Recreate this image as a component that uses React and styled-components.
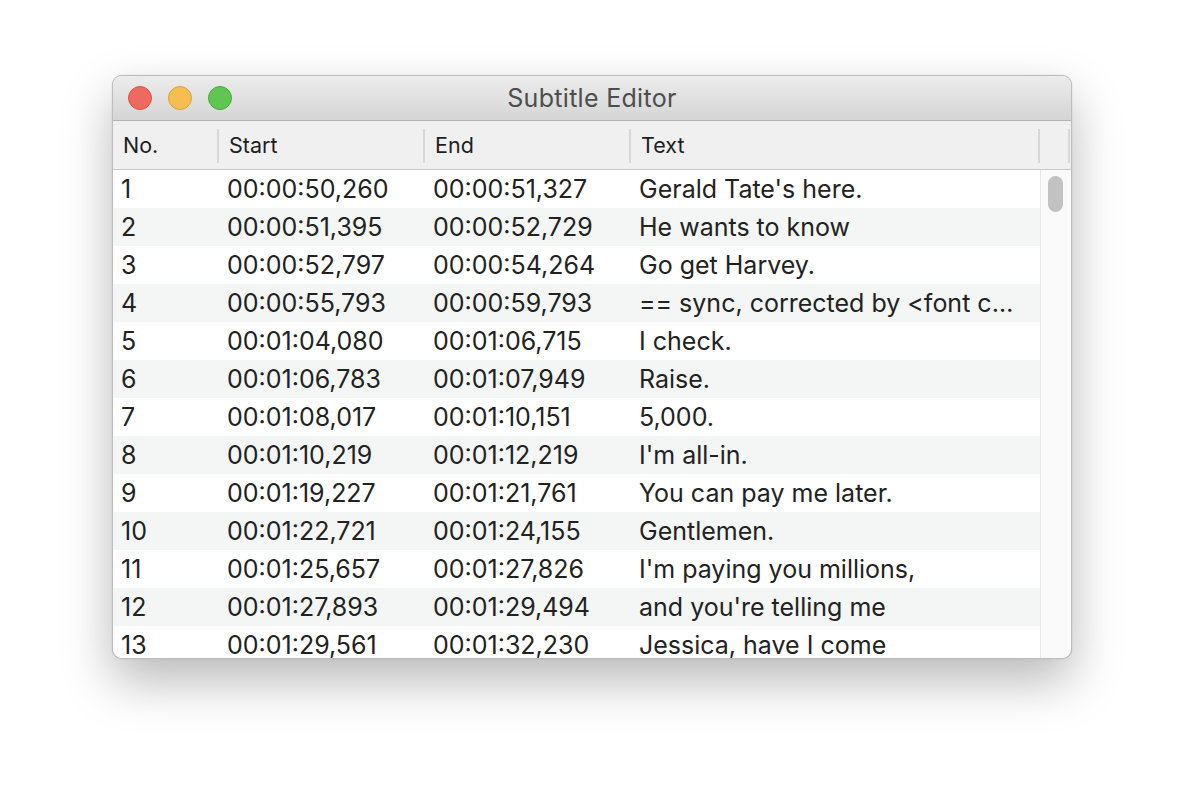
import styled, { createGlobalStyle } from "styled-components"

const Global = createGlobalStyle`
  html, body { margin: 0; padding: 0; background: #ffffff; }
  body { font-family: Inter, "Liberation Sans", sans-serif; }
`

const Page = styled.div`
  width: 1184px;
  height: 808px;
  padding: 75px 0 0 112px;
  box-sizing: border-box;
`

const Window = styled.div`
  width: 960px;
  height: 584px;
  box-sizing: border-box;
  border: 1px solid #bdbdbd;
  border-radius: 10px;
  overflow: hidden;
  display: flex;
  flex-direction: column;
  background: #ffffff;
  box-shadow: 0 22px 50px rgba(0, 0, 0, 0.28), 0 0 1px rgba(0, 0, 0, 0.3);
`

const TitleBar = styled.div`
  height: 44px;
  flex-shrink: 0;
  display: flex;
  align-items: center;
  position: relative;
  background: linear-gradient(#ececec, #d5d5d5);
  border-bottom: 1px solid #b3b3b3;
`

const Lights = styled.div`
  display: flex;
  gap: 16px;
  padding-left: 15px;
`

const Light = styled.span`
  width: 24px;
  height: 24px;
  border-radius: 50%;
  box-sizing: border-box;
  background: ${p => p.$fill};
  border: 1px solid ${p => p.$edge};
`

const Title = styled.div`
  position: absolute;
  left: 0;
  right: 0;
  text-align: center;
  font-size: 25px;
  letter-spacing: 0.3px;
  color: #4d4d4d;
  pointer-events: none;
`

const Header = styled.div`
  height: 48px;
  flex-shrink: 0;
  display: grid;
  grid-template-columns: 106px 206px 206px 409px 30px;
  background: #f0f0f0;
  border-bottom: 1px solid #c9c9c9;
`

const HeadCell = styled.div`
  display: flex;
  align-items: center;
  padding-left: 10px;
  font-size: 21.5px;
  color: #1e1e1e;
  position: relative;
  &::after {
    content: "";
    position: absolute;
    right: 0;
    top: 8px;
    bottom: 6px;
    width: 2px;
    background: #d8d8d8;
  }
`

const Body = styled.div`
  flex: 1;
  display: flex;
  overflow: hidden;
`

const Rows = styled.div`
  width: 927px;
  overflow: hidden;
`

const Row = styled.div`
  height: 38px;
  display: grid;
  grid-template-columns: 106px 206px 206px 409px;
  align-items: center;
  background: ${p => (p.$odd ? "#f4f5f5" : "#ffffff")};
  font-size: 25px;
  color: #222;
`

const Cell = styled.div`
  padding-left: 8px;
  padding-right: 20px;
  white-space: nowrap;
  overflow: hidden;
  text-overflow: ellipsis;
`

const Track = styled.div`
  width: 29px;
  background: #fafafa;
  border-left: 1px solid #e6e6e6;
  display: flex;
  justify-content: center;
  padding-top: 6px;
`

const Thumb = styled.div`
  width: 15px;
  height: 36px;
  border-radius: 8px;
  background: #c2c2c2;
`

const subs = [
  ["1", "00:00:50,260", "00:00:51,327", "Gerald Tate's here."],
  ["2", "00:00:51,395", "00:00:52,729", "He wants to know"],
  ["3", "00:00:52,797", "00:00:54,264", "Go get Harvey."],
  ["4", "00:00:55,793", "00:00:59,793", '== sync, corrected by <font color="#00ff00">elderman</font> =='],
  ["5", "00:01:04,080", "00:01:06,715", "I check."],
  ["6", "00:01:06,783", "00:01:07,949", "Raise."],
  ["7", "00:01:08,017", "00:01:10,151", "5,000."],
  ["8", "00:01:10,219", "00:01:12,219", "I'm all-in."],
  ["9", "00:01:19,227", "00:01:21,761", "You can pay me later."],
  ["10", "00:01:22,721", "00:01:24,155", "Gentlemen."],
  ["11", "00:01:25,657", "00:01:27,826", "I'm paying you millions,"],
  ["12", "00:01:27,893", "00:01:29,494", "and you're telling me"],
  ["13", "00:01:29,561", "00:01:32,230", "Jessica, have I come"],
]

export default function App() {
  return (
    <>
      <Global />
      <Page>
        <Window>
          <TitleBar>
            <Lights>
              <Light $fill="#ee6a5f" $edge="#d55448" />
              <Light $fill="#f6be4f" $edge="#dba03a" />
              <Light $fill="#61c554" $edge="#4aa93d" />
            </Lights>
            <Title>Subtitle Editor</Title>
          </TitleBar>
          <Header>
            <HeadCell>No.</HeadCell>
            <HeadCell>Start</HeadCell>
            <HeadCell>End</HeadCell>
            <HeadCell>Text</HeadCell>
            <HeadCell />
          </Header>
          <Body>
            <Rows>
              {subs.map((s, i) => (
                <Row key={s[0]} $odd={i % 2 === 1}>
                  {s.map((v, j) => (
                    <Cell key={j}>{v}</Cell>
                  ))}
                </Row>
              ))}
            </Rows>
            <Track>
              <Thumb />
            </Track>
          </Body>
        </Window>
      </Page>
    </>
  )
}
